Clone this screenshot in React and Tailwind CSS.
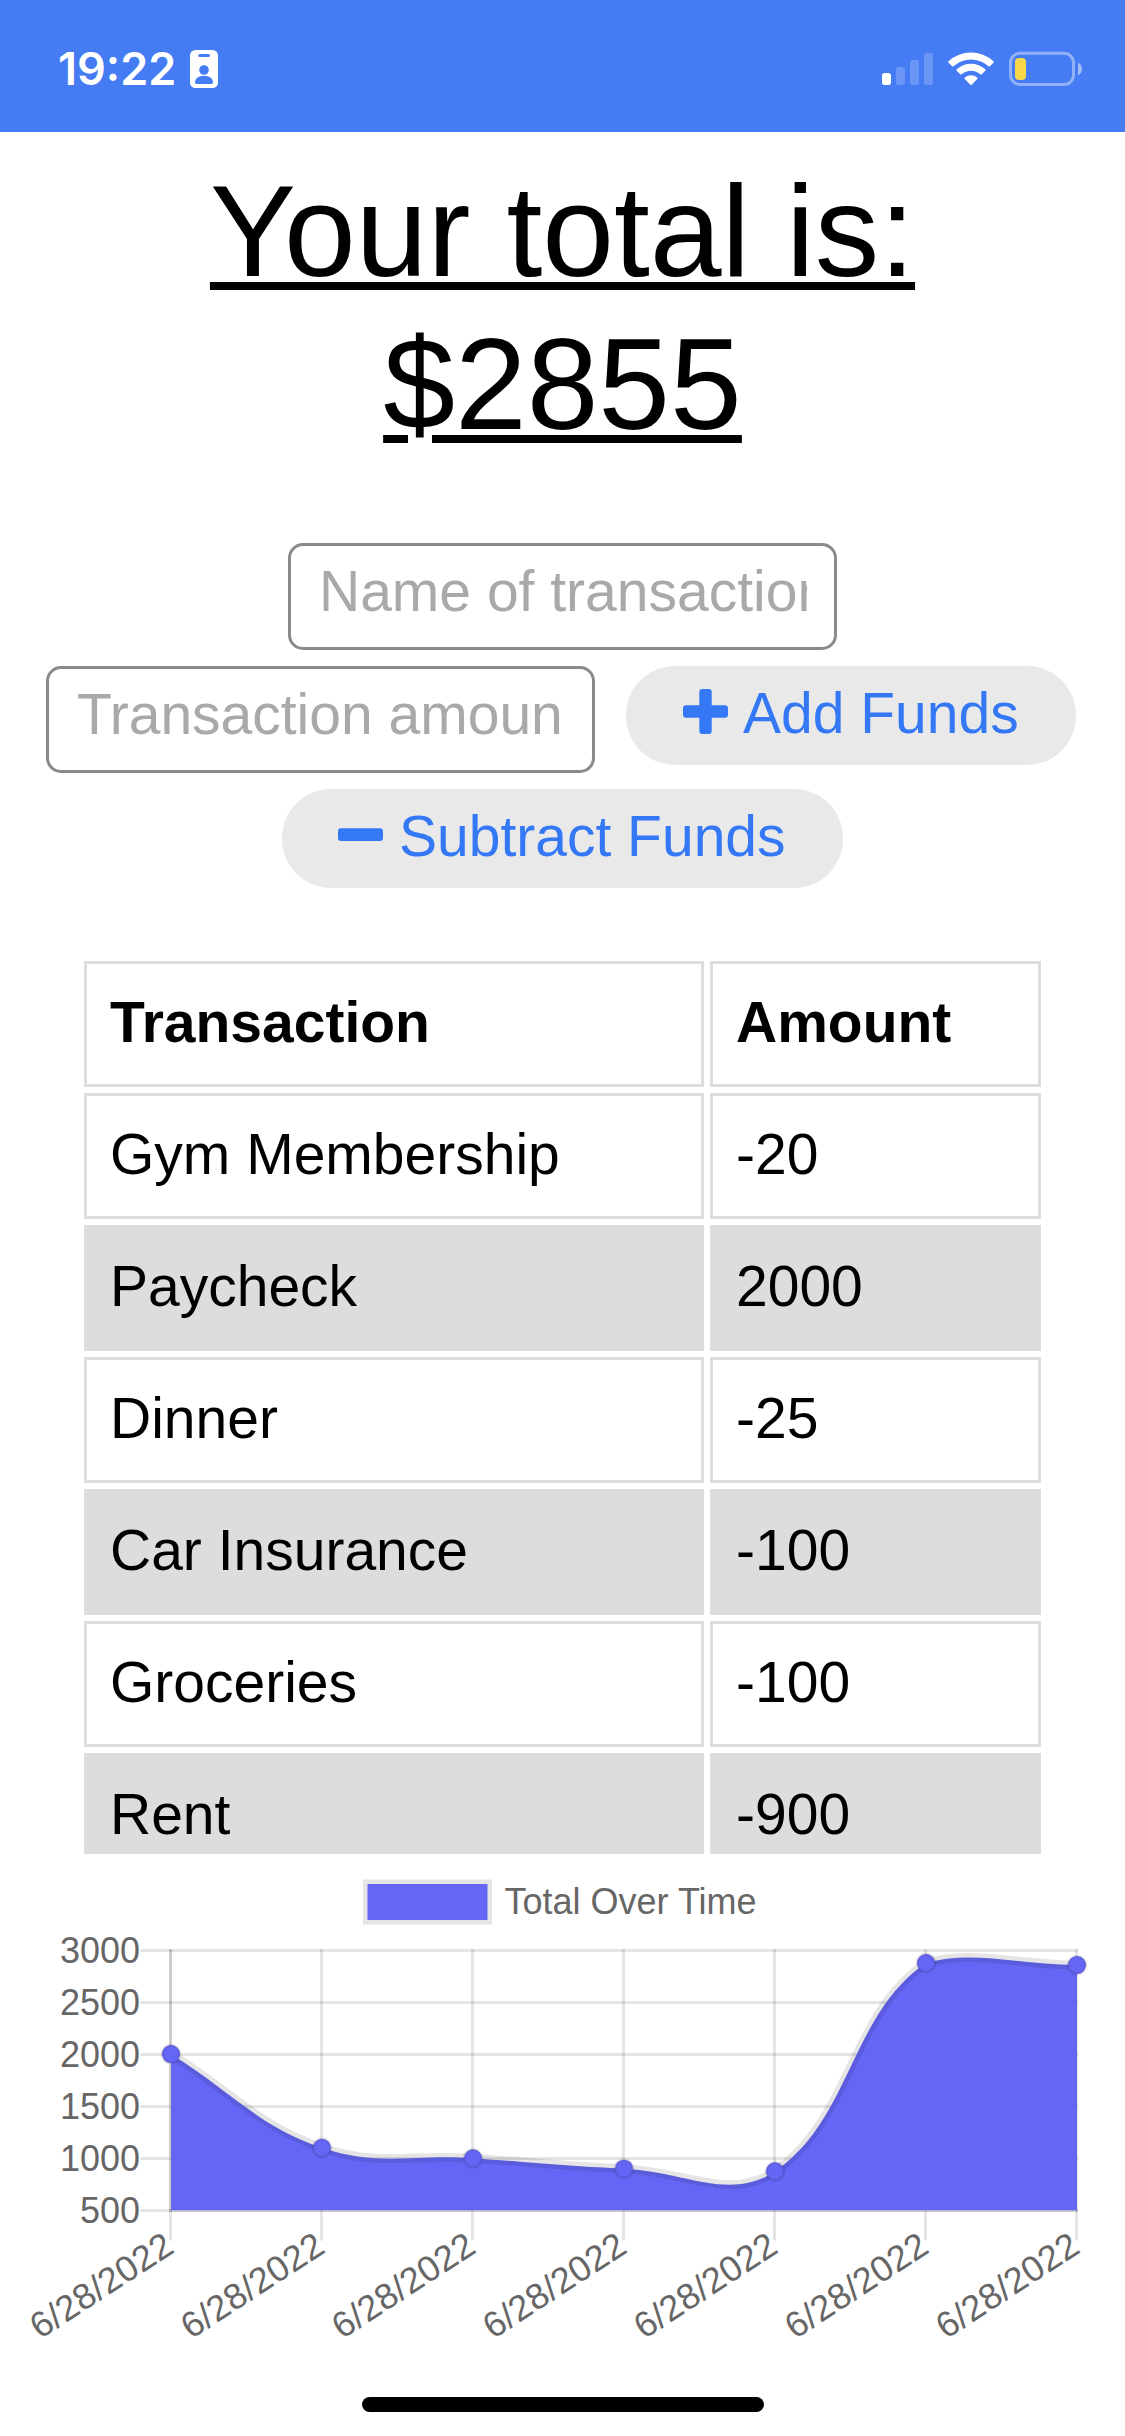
import React from "react";

const transactions = [
  ["Gym Membership", "-20"],
  ["Paycheck", "2000"],
  ["Dinner", "-25"],
  ["Car Insurance", "-100"],
  ["Groceries", "-100"],
  ["Rent", "-900"],
];

const totals = [2000, 1100, 1000, 900, 875, 2875, 2855];
const yTicks = [3000, 2500, 2000, 1500, 1000, 500];
const TENSION = 0.4;

function StatusBar() {
  return (
    <header className="flex h-[132px] items-start justify-between bg-[#467cf3] pr-[43px] pl-[58px] text-white">
      <div className="flex pt-[50px]">
        <span className="w-[132px] font-['Inter',sans-serif] text-[45px] leading-[38px] font-semibold">
          19:22
        </span>
        <svg width="28" height="38" viewBox="0 0 28 38">
          <rect width="28" height="38" rx="5.5" fill="#fff" />
          <rect x="8.3" y="4" width="11.7" height="3" rx="1.5" fill="#467cf3" />
          <circle cx="14" cy="20" r="4.8" fill="#467cf3" />
          <path d="M5 32.2c0-3.600 4-6.400 9-6.400s9 2.800 9 6.400c0 1.200-.6 1.800-1.600 1.800H6.600c-1 0-1.600-.6-1.600-1.800z" fill="#467cf3" />
        </svg>
      </div>
      <svg className="mt-[50px]" width="200" height="38" viewBox="882 50 200 38">
        <rect x="882" y="73" width="9" height="12" rx="2.800" fill="#fff" />
        <g fill="#fff" fillOpacity="0.2">
          <rect x="896" y="67" width="9" height="18" rx="2.800" />
          <rect x="910" y="60" width="9" height="25" rx="2.800" />
          <rect x="924" y="53" width="9" height="32" rx="2.800" />
        </g>
        <g fill="#fff">
          <path d="M948.600 61.300A33 33 0 0 1 993.400 61.300Q994 62 993.400 62.700L989.900 66.200Q989.200 66.800 988.500 66.200A26 26 0 0 0 953.500 66.200Q952.800 66.800 952.100 66.200L948.600 62.700Q948 62 948.600 61.300Z" />
          <path d="M956.700 69.300A21 21 0 0 1 985.300 69.300Q986 70 985.300 70.700L981.700 74.300Q981 74.900 980.300 74.300A14 14 0 0 0 961.700 74.300Q961 74.900 960.300 74.300L956.700 70.700Q956 70 956.700 69.300Z" />
          <path d="M964.800 77.600A9.500 9.500 0 0 1 977.200 77.600Q977.900 78.300 977.200 79L971.700 84.700Q971 85.300 970.300 84.700L964.800 79Q964.100 78.300 964.800 77.600Z" />
        </g>
        <rect x="1010.500" y="53.300" width="63" height="31.200" rx="9.500" fill="none" stroke="#fff" strokeOpacity="0.4" strokeWidth="3" />
        <rect x="1015" y="58" width="11" height="22" rx="4" fill="#f8d74a" />
        <path d="M1078 62.700C1080.500 63.700 1082 66 1082 69C1082 72 1080.500 74.300 1078 75.300Z" fill="#fff" fillOpacity="0.5" />
      </svg>
    </header>
  );
}

function FundsButton({ label, className, children }) {
  return (
    <button
      className={`flex h-[99px] items-center rounded-[49px] bg-[#e9e9e9] pb-1.5 whitespace-nowrap text-[#3478f6] ${className}`}
    >
      <svg className="mt-[-3px] shrink-0" width="45" height="45" viewBox="0 0 45 45" fill="currentColor">
        {children}
      </svg>
      {label}
    </button>
  );
}

function TransactionForm() {
  const field =
    "h-[107px] w-[549px] rounded-[15px] border-3 border-[#8a8a8c] bg-white pl-[28px] pb-[11px] placeholder:text-[#a9a9a9] outline-none";
  return (
    <form className="flex flex-col items-center gap-4 text-[57px] leading-[66px]">
      <input className={`${field} pr-[27px]`} placeholder="Name of transaction" />
      <div className="mr-[3px] flex items-start gap-[31px]">
        <input className={`${field} pr-[30px]`} placeholder="Transaction amount" />
        <FundsButton label="Add Funds" className="w-[450px] gap-[15px] pl-[57px]">
          <rect x="16.300" y="0" width="12.400" height="45" rx="3" />
          <rect x="0" y="16.300" width="45" height="12.400" rx="3" />
        </FundsButton>
      </div>
      <FundsButton label="Subtract Funds" className="w-[561px] gap-4 pl-14">
        <rect x="0" y="16.300" width="45" height="12.700" rx="3" />
      </FundsButton>
    </form>
  );
}

function TransactionTable() {
  return (
    <div className="mx-auto h-[893px] w-[957px] overflow-hidden text-[57px] leading-[66px]">
      <div className="grid grid-cols-[620px_331px] gap-1.5">
        {["Transaction", "Amount"].map((h) => (
          <div key={h} className="flex h-[126px] items-center border-3 border-[#ddd] pb-[5px] pl-[23px] font-bold">
            {h}
          </div>
        ))}
        {transactions.map((row, r) =>
          row.map((value, c) => (
            <div
              key={`${r}-${c}`}
              className={`flex h-[126px] items-center border-3 border-[#ddd] pb-[5px] pl-[23px] ${r % 2 ? "bg-[#ddd]" : "bg-white"}`}
            >
              {value}
            </div>
          )),
        )}
      </div>
    </div>
  );
}

const points = totals.map((v, i) => ({ x: 171 + i * 151, y: 2210.3 - (v - 500) * 0.10412 }));

// Smooth spline through the points, control handles weighted by neighbour distance
function splinePath(pts) {
  const clamp = (y) => Math.min(2210.3, Math.max(1950, y));
  const handles = pts.map((p, i) => {
    const prev = pts[i - 1] || p;
    const next = pts[i + 1] || p;
    const d01 = Math.hypot(p.x - prev.x, p.y - prev.y);
    const d12 = Math.hypot(next.x - p.x, next.y - p.y);
    const fa = (TENSION * d01) / (d01 + d12);
    const fb = (TENSION * d12) / (d01 + d12);
    return {
      before: [p.x - fa * (next.x - prev.x), clamp(p.y - fa * (next.y - prev.y))],
      after: [p.x + fb * (next.x - prev.x), clamp(p.y + fb * (next.y - prev.y))],
    };
  });
  return pts
    .map((p, i) =>
      i === 0 ? `M${p.x} ${p.y}` : `C${handles[i - 1].after} ${handles[i].before} ${p.x} ${p.y}`,
    )
    .join(" ");
}

function TotalsChart() {
  const line = splinePath(points);
  return (
    <svg
      className="block font-['Liberation_Sans',Arial,sans-serif] text-[36px]"
      width="1125"
      height="543"
      viewBox="0 1854 1125 543"
    >
      <rect x="367.500" y="1884" width="120" height="36" fill="none" stroke="#000" strokeOpacity="0.1" strokeWidth="9" />
      <rect x="367.500" y="1884" width="120" height="36" fill="#6666f6" />
      <text x="504.500" y="1914" fill="#666">Total Over Time</text>
      <g stroke="#000" strokeOpacity="0.1" strokeWidth="3">
        {yTicks.map((t, i) => (
          <line key={t} x1="140.500" x2="1078" y1={1950.5 + i * 52} y2={1950.5 + i * 52} />
        ))}
        {points.map((p) => (
          <line key={p.x} x1={p.x - 0.5} x2={p.x - 0.5} y1="1949" y2="2240.500" />
        ))}
        <line x1="170.500" x2="170.500" y1="1949" y2="2212" />
        <line x1="169" x2="1078" y1="2210.500" y2="2210.500" />
      </g>
      <path d={`${line} L1077 2210.300 L171 2210.300 Z`} fill="#6666f6" />
      <path d={line} fill="none" stroke="#000" strokeOpacity="0.1" strokeWidth="9" />
      {points.map((p) => (
        <circle key={p.x} cx={p.x} cy={p.y} r="9" fill="#6666f6" stroke="#000" strokeOpacity="0.1" strokeWidth="3" />
      ))}
      <g fill="#666" textAnchor="end">
        {yTicks.map((t, i) => (
          <text key={t} x="140" y={1962.5 + i * 52.1}>{t}</text>
        ))}
        {points.map((p) => (
          <text key={p.x} transform={`translate(${p.x + 4.8} 2251.5) rotate(-33)`} textLength="162">6/28/2022</text>
        ))}
      </g>
    </svg>
  );
}

export default function App() {
  return (
    <div className="h-[2436px] w-[1125px] overflow-hidden bg-white font-['Liberation_Sans',Arial,sans-serif] text-black">
      <StatusBar />
      <h1 className="mt-[23px] mb-[82px] text-center text-[129px] leading-[153px] underline decoration-[8px] underline-offset-[6px]">
        Your total is:
        <br />
        $2855
      </h1>
      <TransactionForm />
      <div className="h-[73px]" />
      <TransactionTable />
      <TotalsChart />
      <div className="mx-auto h-[15px] w-[402px] rounded-full bg-black" />
    </div>
  );
}
